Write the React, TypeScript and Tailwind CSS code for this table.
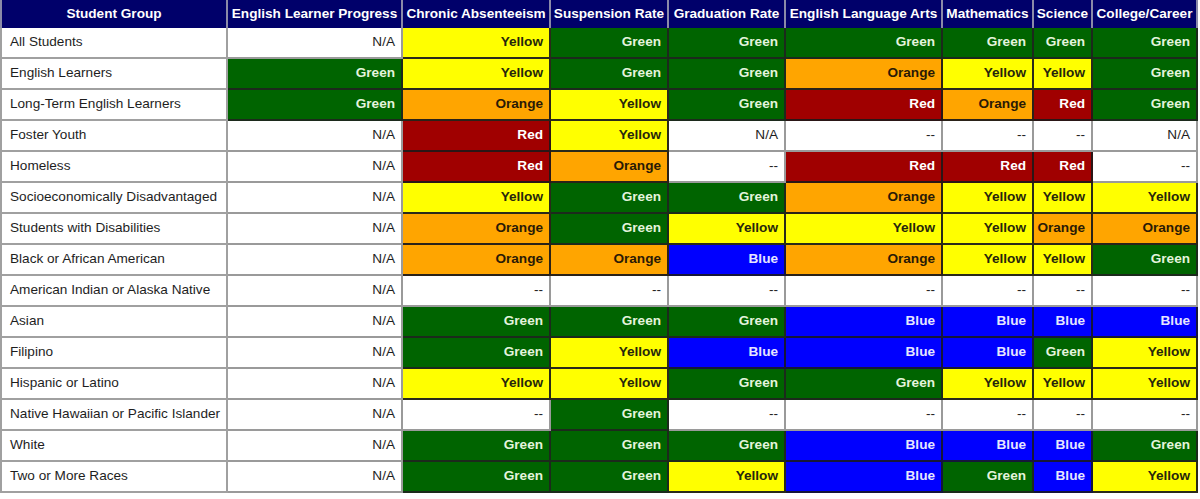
import React from 'react';

type Level = 'Green' | 'Yellow' | 'Orange' | 'Red' | 'Blue' | 'N/A' | '--';

const columns = [
  { label: 'Student Group', width: 'w-[228px]' },
  { label: 'English Learner Progress', width: 'w-[175px]' },
  { label: 'Chronic Absenteeism', width: 'w-[148px]' },
  { label: 'Suspension Rate', width: 'w-[118px]' },
  { label: 'Graduation Rate', width: 'w-[117px]' },
  { label: 'English Language Arts', width: 'w-[157px]' },
  { label: 'Mathematics', width: 'w-[91px]' },
  { label: 'Science', width: 'w-[59px]' },
  { label: 'College/Career', width: 'w-[105px]' },
];

const rows: [string, Level[]][] = [
  ['All Students', ['N/A', 'Yellow', 'Green', 'Green', 'Green', 'Green', 'Green', 'Green']],
  ['English Learners', ['Green', 'Yellow', 'Green', 'Green', 'Orange', 'Yellow', 'Yellow', 'Green']],
  ['Long-Term English Learners', ['Green', 'Orange', 'Yellow', 'Green', 'Red', 'Orange', 'Red', 'Green']],
  ['Foster Youth', ['N/A', 'Red', 'Yellow', 'N/A', '--', '--', '--', 'N/A']],
  ['Homeless', ['N/A', 'Red', 'Orange', '--', 'Red', 'Red', 'Red', '--']],
  ['Socioeconomically Disadvantaged', ['N/A', 'Yellow', 'Green', 'Green', 'Orange', 'Yellow', 'Yellow', 'Yellow']],
  ['Students with Disabilities', ['N/A', 'Orange', 'Green', 'Yellow', 'Yellow', 'Yellow', 'Orange', 'Orange']],
  ['Black or African American', ['N/A', 'Orange', 'Orange', 'Blue', 'Orange', 'Yellow', 'Yellow', 'Green']],
  ['American Indian or Alaska Native', ['N/A', '--', '--', '--', '--', '--', '--', '--']],
  ['Asian', ['N/A', 'Green', 'Green', 'Green', 'Blue', 'Blue', 'Blue', 'Blue']],
  ['Filipino', ['N/A', 'Green', 'Yellow', 'Blue', 'Blue', 'Blue', 'Green', 'Yellow']],
  ['Hispanic or Latino', ['N/A', 'Yellow', 'Yellow', 'Green', 'Green', 'Yellow', 'Yellow', 'Yellow']],
  ['Native Hawaiian or Pacific Islander', ['N/A', '--', 'Green', '--', '--', '--', '--', '--']],
  ['White', ['N/A', 'Green', 'Green', 'Green', 'Blue', 'Blue', 'Blue', 'Green']],
  ['Two or More Races', ['N/A', 'Green', 'Green', 'Yellow', 'Blue', 'Green', 'Blue', 'Yellow']],
];

// fill + text colour per status
const cellStyle: Record<Level, string> = {
  Green: 'bg-[#006400] text-[#e4f4dc] border-[#1c2a1c]',
  Yellow: 'bg-[#ffff00] text-[#26260c] border-[#2a2a1a]',
  Orange: 'bg-[#ffa500] text-[#2a1a06] border-[#2a2218]',
  Red: 'bg-[#a00000] text-[#ffffff] border-[#2a1616]',
  Blue: 'bg-[#0000ff] text-[#e6e6ff] border-[#16163a]',
  'N/A': 'bg-white text-[#1e1e1e] border-[#9a9a9a]',
  '--': 'bg-white text-[#1e1e1e] border-[#9a9a9a]',
};

export default function App() {
  return (
    <div className="w-[1200px] h-[499px] bg-white" style={{ fontFamily: '"Liberation Sans", Arial, sans-serif' }}>
      <table className="table-fixed border-separate border-spacing-0 w-[1198px] text-[13.6px]">
        <thead>
          <tr className="h-[28px]">
            {columns.map((c) => (
              <th
                key={c.label}
                className={`${c.width} bg-[#00006a] text-white font-bold text-center whitespace-nowrap px-0 border-r-2 border-[#8a8aa8] first:border-l-2`}
              >
                {c.label}
              </th>
            ))}
          </tr>
        </thead>
        <tbody>
          {rows.map(([group, values]) => (
            <tr key={group} className="h-[31px]">
              <td className="pl-[8px] text-[#1e1e1e] whitespace-nowrap border-l-2 border-r-2 border-b-2 border-[#a0a0a0]">
                {group}
              </td>
              {values.map((v, i) => (
                <td
                  key={i}
                  className={`${cellStyle[v]} text-right pr-[6px] whitespace-nowrap border-r-2 border-b-2 ${v === 'N/A' || v === '--' ? 'font-normal' : 'font-bold'}`}
                >
                  {v}
                </td>
              ))}
            </tr>
          ))}
        </tbody>
      </table>
    </div>
  );
}
